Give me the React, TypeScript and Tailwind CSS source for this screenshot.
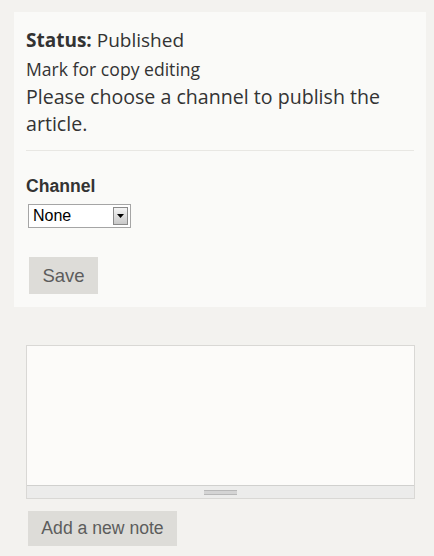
export default function App() {
  return (
    <div className="w-[434px] h-[556px] bg-[#f3f2ef] pt-[12px] overflow-hidden text-[#333]">
      {/* status panel */}
      <div className="ml-[14px] w-[412px] bg-[#fafaf8] px-[12px] pt-[13px] pb-[13px]">
        <p className="font-['Open_Sans',sans-serif] text-[19px] leading-[30px]">
          <span className="font-bold">Status:</span> Published
        </p>
        <p className="font-['Open_Sans',sans-serif] text-[17.6px] leading-[28px]">
          Mark for copy editing
        </p>
        <p className="font-['Open_Sans',sans-serif] text-[19.6px] leading-[27px] pr-[20px]">
          Please choose a channel to publish the article.
        </p>
        <div className="mt-[13px] border-t border-[#e8e7e3]" />

        <label className="block mt-[25px] font-['Liberation_Sans',Arial,sans-serif] font-bold text-[17.6px] leading-[20px]">
          Channel
        </label>
        <div className="mt-[8px] ml-[2px] flex w-[103px] h-[24px] border border-[#a5a5a5] bg-white font-['Liberation_Sans',Arial,sans-serif] text-[16px] text-black">
          <span className="flex-1 pl-[4px] leading-[22px]">None</span>
          <span className="m-[2px] w-[15px] flex items-center justify-center border border-[#8a8a8a] bg-gradient-to-b from-[#f4f4f4] to-[#c9c9c9]">
            <svg width="7" height="4" viewBox="0 0 7 4">
              <path d="M0 0h7L3.5 4z" fill="#000" />
            </svg>
          </span>
        </div>

        <button className="mt-[29px] ml-[3px] h-[37px] w-[69px] bg-[#dddcd8] font-['Liberation_Sans',Arial,sans-serif] text-[18.5px] text-[#5c5c5c]">
          Save
        </button>
      </div>

      {/* notes */}
      <div className="ml-[26px] mt-[38px] w-[389px] h-[154px] border border-[#d9d8d5] flex flex-col">
        <div className="flex-1 bg-[#fcfbf9]" />
        <div className="h-[13px] border-t border-[#d0d0ce] bg-[#ececeb] flex items-center justify-center">
          <div className="w-[33px] h-[5px] border-y border-[#b8b8b8] bg-[#d4d4d4]" />
        </div>
      </div>
      <button className="mt-[12px] ml-[28px] h-[35px] w-[149px] bg-[#dddcd8] font-['Liberation_Sans',Arial,sans-serif] text-[17.6px] text-[#5c5c5c]">
        Add a new note
      </button>
    </div>
  );
}
